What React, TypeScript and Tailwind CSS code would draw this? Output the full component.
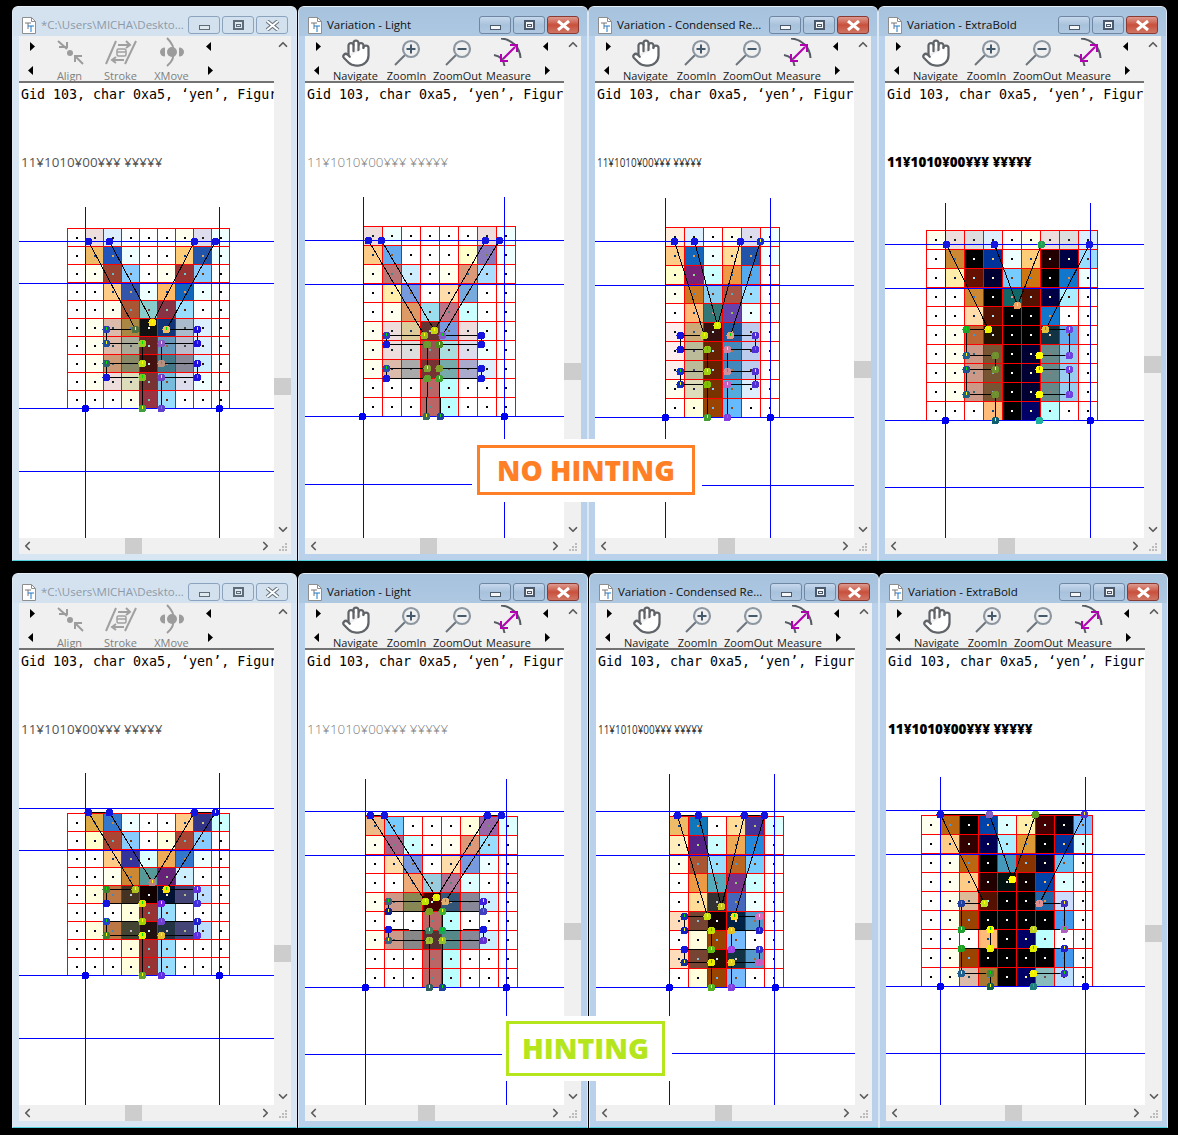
import React from 'react';
import { ChevronDown, ChevronLeft, ChevronRight, ChevronUp, Hand } from 'lucide-react';

type Pt = [number, number, string];

interface Panel {
  ox: number; // crop origin the coordinates below were read from, page px
  oy: number;
  x0: number;
  y0: number;
  cell: number;
  vert: [number, number];
  vTop: number;
  horiz: number[];
  lower: number;
  cells: string[];
  pts: Pt[];
  big: [number, number][];
}

const B = '#1414e0';

const rowsOf = (s: string) => s.split('|');

// Coordinates are 3x page px
const TOP_REGULAR: Panel = {
  ox: 10, oy: 190, x0: 172, y0: 115, cell: 54, vert: [226, 628], vTop: 52, horiz: [154, 280, 655], lower: 471,
  cells: rowsOf('fff edd def fff fff fff ffe dde eff|fff eb6 25b eff fff fff fc7 25a eff|fff ffe 943 8cf fff ffe 933 8cf fff|fff fff fc8 35a eff fb6 16b eff fff|fff fff ffe a53 8cc 834 9df fff fff|fff ffe dba a84 111 137 abc def fff|fff ffe dba aa9 622 69b bbc def fff|fff ffe c97 886 411 478 889 cef fff|fff ffe edd ddb 733 7bd dde eff fff|fff fff fff ffe 934 9df fff fff fff'),
  pts: [[236, 153, B], [377, 418, '#507040'], [288, 418, '#2840c0'], [288, 460, '#2050a0'], [397, 460, '#98d020'], [397, 519, '#b8e010'], [288, 519, '#306070'], [288, 561, B], [397, 561, '#80c020'], [397, 655, '#40a040'], [453, 655, '#6040d0'], [454, 561, '#7040c8'], [561, 561, '#2010e0'], [561, 519, '#2010e0'], [454, 519, '#b89080'], [454, 460, '#8858c0'], [561, 460, '#2010e0'], [561, 418, '#2010e0'], [470, 418, '#f0c060'], [615, 153, B], [554, 153, B], [426, 398, '#ffe010'], [297, 153, B]],
  big: [[225, 655], [627, 655]],
};

const TOP_LIGHT: Panel = {
  ox: 300, oy: 190, x0: 190, y0: 109, cell: 57, vert: [190, 613], vTop: 21, horiz: [151, 283, 679], lower: 484,
  cells: rowsOf('edd eff fff fff fff fff edd eff|fc8 6ae fff fff fff ffc 87b eff|ffe b77 cef fff ffe d97 adf fff|fff fea 79d fff fda 7ad fff fff|fff ffe d96 9de b78 cff fff fff|ffe edd dc9 633 79d edd eff fff|ffe edd ddd 955 add dde eff fff|ffe dba aaa 733 7aa aac def fff|fff fff fff b66 bff fff fff fff|fff fff fff b66 bff fff fff fff'),
  pts: [[204, 151, B], [372, 435, '#9ab820'], [258, 435, '#2a3cc0'], [258, 463, B], [381, 463, '#6a9a30'], [381, 536, '#80a030'], [258, 536, '#2a4cb0'], [258, 566, B], [381, 566, '#60a030'], [380, 678, '#3a6a60'], [420, 678, '#2040a0'], [419, 566, '#40a030'], [543, 566, B], [543, 536, B], [419, 536, '#80a030'], [419, 463, '#508820'], [543, 463, B], [543, 435, B], [428, 435, '#8855cc'], [597, 151, B], [555, 151, B], [403, 422, '#c4d410'], [245, 151, B]],
  big: [[188, 678], [612, 678]],
};

const TOP_CONDENSED: Panel = {
  ox: 590, oy: 190, x0: 226, y0: 112, cell: 57, vert: [226, 541], vTop: 24, horiz: [154, 286, 682], lower: 485,
  cells: rowsOf('fed def fff ffe dde eff|fc8 16b eff fd9 25a eff|ffc 727 cff e94 5ae fff|ffe c72 8ce a54 9df fff|fff fb7 377 64a eff fff|fee ca7 311 259 bce fff|fee bb9 620 48b bce fff|fee bb9 620 48b bce fff|ffe ddb 730 5ad def fff|fff ffd 940 6bf fff fff'),
  pts: [[252, 153, B], [342, 435, '#c0e010'], [270, 435, B], [270, 477, B], [351, 477, '#90c010'], [351, 543, '#a0d010'], [270, 543, '#1030d0'], [270, 582, '#1030c0'], [351, 582, '#80c000'], [351, 681, '#40a030'], [411, 681, '#8040e0'], [411, 582, '#c060c0'], [495, 582, '#5030d0'], [495, 543, '#5030d0'], [411, 543, '#d090a0'], [411, 477, '#d080a0'], [495, 477, '#5030d8'], [495, 435, '#5030d0'], [420, 435, '#e0a080'], [510, 153, '#1030d0'], [450, 153, B], [381, 405, '#d8f000'], [312, 153, B]],
  big: [[225, 681], [540, 681]],
};

const TOP_BOLD: Panel = {
  ox: 880, oy: 190, x0: 139, y0: 121, cell: 57, vert: [196, 631], vTop: 39, horiz: [162, 295, 691], lower: 487,
  cells: rowsOf('ffe edd ddd def fff ffe edd ddd def|fff c83 000 039 eff fc7 200 004 9df|fff fea 610 003 7cf c71 000 17c eff|fff fff c83 000 166 510 004 aef fff|fff fff fda 510 000 000 17c fff fff|fff ffe b63 210 000 000 134 6ae fff|fff ffe c98 753 000 003 688 9ce fff|fff ffe c98 753 000 003 688 9ce fff|fff ffe c98 753 000 003 688 9ce fff|fff fff fff fb7 000 006 bff fff fff'),
  pts: [[198, 162, B], [326, 417, '#e8f000'], [258, 417, '#20a030'], [258, 495, '#206090'], [345, 495, '#709030'], [345, 537, '#709030'], [258, 537, '#205090'], [258, 612, '#206080'], [345, 612, '#709030'], [345, 690, '#106070'], [477, 690, '#20b0a0'], [477, 612, '#ffff00'], [567, 612, '#7040e0'], [567, 537, '#7040e0'], [477, 537, '#ffff00'], [477, 495, '#ffff00'], [567, 495, '#7040e0'], [567, 417, '#7040e0'], [495, 417, '#e0c040'], [627, 162, B], [483, 162, '#20a050'], [411, 345, '#f0a060'], [342, 162, B]],
  big: [[195, 690], [630, 690]],
};

const BOTTOM_REGULAR: Panel = {
  ox: 10, oy: 770, x0: 172, y0: 130, cell: 54, vert: [226, 628], vTop: 10, horiz: [115, 241, 616], lower: 1038,
  cells: rowsOf('fff da4 37c eff fff fff fc8 338 cff|fff ffc a43 8cf fff ffd a43 8cf fff|fff fff fc8 339 dff ea5 37c eff fff|fff fff ffe c83 599 627 cef fff fff|fff ffd b74 432 100 013 447 bdf fff|fff fff fff ffd 933 9df fff fff fff|fff ffd b74 443 211 234 447 bdf fff|fff fff fff ffd 933 9df fff fff fff|fff fff fff ffd 933 9df fff fff fff'),
  pts: [[236, 126, B], [377, 357, '#b0c020'], [288, 357, '#408030'], [288, 400, B], [397, 400, '#e0e000'], [397, 453, '#a0d000'], [288, 453, '#2040d0'], [288, 495, '#408030'], [397, 495, '#e0f000'], [397, 616, '#60a030'], [453, 616, '#6030e0'], [454, 495, '#e0c030'], [561, 495, '#6030e0'], [561, 453, '#2020d0'], [454, 453, '#7040d0'], [454, 400, '#7020e0'], [561, 400, '#4030e0'], [561, 357, '#6030e0'], [470, 357, '#ffe000'], [615, 126, '#1010e0'], [554, 126, B], [426, 338, '#c08080'], [297, 126, B]],
  big: [[225, 616], [627, 616]],
};

const BOTTOM_LIGHT: Panel = {
  ox: 300, oy: 770, x0: 196, y0: 139, cell: 57, vert: [196, 619], vTop: 27, horiz: [124, 256, 652], lower: 1054,
  cells: rowsOf('eb8 7cf fff fff fff ffd 96a dff|ffe a68 cff fff ffe d97 9df fff|fff fda 79d fff fda 79d eff fff|fff fff ea7 9cd a79 dff fff fff|ffe c98 885 400 357 889 cef fff|fff fff fff b66 bff fff fff fff|ffe c98 888 533 588 889 cef fff|fff fff fff b66 bff fff fff fff|fff fff fff b66 bff fff fff fff'),
  pts: [[210, 137, B], [377, 393, '#c0e000'], [264, 393, '#406080'], [264, 423, '#102090'], [387, 423, '#80a020'], [387, 481, '#408060'], [264, 478, B], [264, 510, '#406080'], [387, 510, '#a0c030'], [387, 651, '#306060'], [426, 651, '#2040a0'], [426, 510, '#90c030'], [549, 510, '#6030d0'], [549, 478, B], [426, 481, '#20a060'], [426, 423, '#40b030'], [549, 423, '#4040c0'], [549, 393, '#4020e0'], [435, 393, '#e0b070'], [603, 137, B], [561, 137, B], [408, 381, '#e0f000'], [252, 137, B]],
  big: [[195, 651], [618, 651]],
};

const BOTTOM_CONDENSED: Panel = {
  ox: 590, oy: 770, x0: 239, y0: 139, cell: 57, vert: [238, 553], vTop: 12, horiz: [124, 256, 652], lower: 1053,
  cells: rowsOf('eb6 17b fff fd9 439 dff|feb 528 cff ea5 28d fff|ffe a53 9df b62 7cf fff|fff e94 5ab 738 cff fff|fff fd9 333 46b eff fff|fdb 743 100 024 59c fff|fff ffd 940 7bf fff fff|fdb 743 210 134 59c fff|fff ffd 940 7bf fff fff'),
  pts: [[263, 137, B], [353, 438, '#c8e010'], [282, 438, '#1030b0'], [282, 480, '#1020c0'], [363, 480, '#c0e000'], [363, 537, '#60c010'], [282, 537, B], [282, 576, '#103090'], [363, 576, '#e8f000'], [363, 651, '#50b020'], [423, 651, '#8040e0'], [423, 576, '#e0d020'], [507, 576, '#c060c0'], [507, 537, '#3030d0'], [423, 537, '#a040e0'], [423, 480, '#e0c020'], [507, 480, '#2020d0'], [507, 438, '#d070c0'], [432, 438, '#ffd820'], [522, 137, B], [462, 137, B], [393, 408, '#c8c820'], [324, 137, B]],
  big: [[237, 651], [555, 651]],
};

const BOTTOM_BOLD: Panel = {
  ox: 880, oy: 770, x0: 125, y0: 136, cell: 57, vert: [181, 616], vTop: 21, horiz: [121, 253, 649], lower: 1053,
  cells: rowsOf('ffe b61 000 04a dff fea 400 001 7bf|fff fc8 300 005 aef d93 000 039 dff|fff ffe b61 000 49b 830 002 6be fff|fff ffe fc8 200 011 100 04a dff fff|fff ffe db9 510 000 000 26a cdf fff|fff ffe 940 000 000 000 000 49e fff|fff fff fff fb7 000 006 bff fff fff|fff ffe 940 000 000 000 000 49e fff|fff ffe dba a73 000 006 8bb bdf fff'),
  pts: [[182, 133, B], [312, 399, '#c0e020'], [243, 399, '#2040a0'], [243, 477, '#20a030'], [330, 477, '#ffff00'], [330, 534, '#e8f000'], [243, 534, '#20a020'], [243, 609, '#206090'], [330, 609, '#508040'], [330, 648, '#106050'], [461, 648, '#208080'], [461, 609, '#f0f000'], [552, 609, '#4030d0'], [552, 534, '#2020d0'], [461, 534, '#e0f000'], [461, 477, '#c0d020'], [552, 477, '#b060c0'], [552, 399, '#4030c0'], [479, 399, '#e09090'], [612, 133, '#5030d0'], [467, 133, '#60a020'], [396, 327, '#ffff00'], [327, 133, '#8060c0']],
  big: [[180, 648], [615, 648]],
};

// grid dots are xor-drawn, so they come out as the inverse of the cell
const invert = (c: string) =>
  '#' + c.split('').map((d) => (15 - parseInt(d, 16)).toString(16)).join('');

const GlyphView: React.FC<{ panel: Panel; left: number; top: number; width: number; height: number }> = ({
  panel,
  left,
  top,
  width,
  height,
}) => {
  const px = (x: number) => Math.floor(panel.ox + x / 3);
  const py = (y: number) => Math.floor(panel.oy + y / 3);
  const grid = panel.cells.map((r) => r.split(' '));
  const cols = grid[0].length;
  const rows = grid.length;
  const xAt = (i: number) => px(panel.x0 + i * panel.cell);
  const yAt = (i: number) => py(panel.y0 + i * panel.cell);
  const outline = panel.pts.map(([x, y]) => `${px(x) + 0.5},${py(y) + 0.5}`).join(' ');
  const bottom = top + height;

  return (
    <svg
      className="absolute inset-0"
      width={width}
      height={height}
      viewBox={`${left} ${top} ${width} ${height}`}
      shapeRendering="crispEdges"
    >
      {grid.map((row, r) =>
        row.map((c, i) => (
          <g key={`${r}-${i}`}>
            {c !== 'fff' && <rect x={xAt(i)} y={yAt(r)} width={xAt(i + 1) - xAt(i)} height={yAt(r + 1) - yAt(r)} fill={`#${c}`} />}
            <rect
              x={Math.floor((xAt(i) + xAt(i + 1)) / 2)}
              y={Math.floor((yAt(r) + yAt(r + 1)) / 2)}
              width={2}
              height={2}
              fill={invert(c)}
            />
          </g>
        )),
      )}
      {Array.from({ length: cols + 1 }, (_, i) => (
        <line key={i} x1={xAt(i) + 0.5} x2={xAt(i) + 0.5} y1={yAt(0)} y2={yAt(rows) + 1} stroke="#ff0000" />
      ))}
      {Array.from({ length: rows + 1 }, (_, i) => (
        <line key={i} y1={yAt(i) + 0.5} y2={yAt(i) + 0.5} x1={xAt(0)} x2={xAt(cols) + 1} stroke="#ff0000" />
      ))}
      <polygon points={outline} fill="none" stroke="#000000" />
      {panel.vert.map((x) => (
        <line key={x} x1={px(x) + 0.5} x2={px(x) + 0.5} y1={py(panel.vTop)} y2={bottom} stroke="#0000ff" />
      ))}
      {panel.horiz.map((y) => (
        <line key={y} y1={py(y) + 0.5} y2={py(y) + 0.5} x1={left} x2={left + width} stroke="#0000ff" />
      ))}
      <line y1={panel.lower + 0.5} y2={panel.lower + 0.5} x1={left} x2={left + width} stroke="#0000ff" />
      {panel.pts.map(([x, y, c], i) => (
        <g key={i}>
          <circle cx={px(x) + 0.5} cy={py(y) + 0.5} r={4} fill={c} />
          {c !== B && <rect x={px(x)} y={py(y) - 2} width={1} height={3} fill={i % 2 ? '#ffff00' : '#00e000'} />}
        </g>
      ))}
      {panel.big.map(([x, y]) => (
        <circle key={x} cx={px(x) + 0.5} cy={py(y) + 0.5} r={4} fill="#0000f0" />
      ))}
    </svg>
  );
};

const Tri: React.FC<{ dir: 'left' | 'right' }> = ({ dir }) => (
  <svg width="5" height="9" viewBox="0 0 5 9">
    <polygon points={dir === 'right' ? '0,0 5,4.5 0,9' : '5,0 0,4.5 5,9'} fill="#000000" />
  </svg>
);

const ZoomGlyph: React.FC<{ plus?: boolean }> = ({ plus }) => (
  <svg width="30" height="29" viewBox="0 0 30 29" fill="none">
    <path d="M13 17 L3 27" stroke="#6c747c" strokeWidth="2" />
    <circle cx="19" cy="11" r="8" fill="#f0f0f0" stroke="#8d97a1" strokeWidth="2.2" />
    <path d="M14.5 11 H23.5" stroke="#44596b" strokeWidth="2" />
    {plus && <path d="M19 6.5 V15.5" stroke="#44596b" strokeWidth="2" />}
  </svg>
);

const MeasureGlyph = () => (
  <svg width="32" height="29" viewBox="0 0 32 29" fill="none">
    <path d="M8 0.5 C18 1 27 9 27.5 20" stroke="#555c63" strokeWidth="2" />
    <path d="M1 17 C7 18 11 22 11.5 28" stroke="#555c63" strokeWidth="2" />
    <path d="M10 21 L22 9" stroke="#b000b0" strokeWidth="2.2" />
    <path d="M8 16 V23 H15" stroke="#b000b0" strokeWidth="2" />
    <path d="M17 7 H24 V14" stroke="#b000b0" strokeWidth="2" />
  </svg>
);

const AlignGlyph = () => (
  <svg width="30" height="29" viewBox="0 0 30 29" fill="none" stroke="#9c9c9c">
    <path d="M3 3 L12 11" strokeWidth="2" />
    <path d="M4 9 H12 V4" strokeWidth="2" />
    <path d="M28 26 L20 18" strokeWidth="2" />
    <path d="M20 24 V18 H27" strokeWidth="2" />
    <circle cx="15" cy="15" r="3" fill="#9c9c9c" stroke="none" />
  </svg>
);

const StrokeGlyph = () => (
  <svg width="32" height="29" viewBox="0 0 32 29" fill="none" stroke="#a0a0a0" strokeWidth="2">
    <path d="M1 26 L11 3" />
    <path d="M20 26 L31 3" />
    <path d="M13 7 H24 M21 3 L25 7 L21 10" />
    <path d="M8 22 H19 M11 19 L7 22 L11 25" />
    <rect x="12" y="11" width="9" height="7" rx="1.5" strokeWidth="1.5" />
    <path d="M12 14 H21" strokeWidth="1.5" />
  </svg>
);

const XMoveGlyph = () => (
  <svg width="32" height="31" viewBox="0 0 32 31" fill="#9c9c9c">
    <circle cx="16" cy="15" r="5" />
    <path d="M9 10.5 V19.5 A5 4.5 0 0 1 9 10.5 Z" />
    <path d="M23 10.5 V19.5 A5 4.5 0 0 0 23 10.5 Z" />
    <path d="M11 1 C17 7 18 12 17 15 C18 19 17 24 11 29" fill="none" stroke="#9c9c9c" strokeWidth="2" />
  </svg>
);

const ACTIVE_TOOLS: [string, React.ReactNode][] = [
  ['Navigate', <Hand key="h" size={30} strokeWidth={1.8} color="#606468" fill="#ffffff" />],
  ['ZoomIn', <ZoomGlyph key="i" plus />],
  ['ZoomOut', <ZoomGlyph key="o" />],
  ['Measure', <MeasureGlyph key="m" />],
];

const DISABLED_TOOLS: [string, React.ReactNode][] = [
  ['Align', <AlignGlyph key="a" />],
  ['Stroke', <StrokeGlyph key="s" />],
  ['XMove', <XMoveGlyph key="x" />],
];

const Toolbar: React.FC<{ active: boolean }> = ({ active }) => {
  const tools = active ? ACTIVE_TOOLS : DISABLED_TOOLS;
  return (
    <div className="flex h-[45px] shrink-0 bg-[#f0f0f0]">
      <div className="flex w-[25px] shrink-0 flex-col items-center pt-[6px] gap-[15px]">
        <div className="ml-[1px] flex"><Tri dir="right" /></div>
        <div className="mr-[2px] flex"><Tri dir="left" /></div>
      </div>
      {tools.map(([label, icon]) => (
        <div key={label} className="flex w-[51px] shrink-0 flex-col items-center pt-[2px]">
          <div className="flex h-[29px] items-center justify-center">{icon}</div>
          <span
            className={`mt-[2px] whitespace-nowrap text-[11px] leading-[14px] ${active ? 'text-[#1a1a1a]' : 'text-[#808080]'}`}
          >
            {label}
          </span>
        </div>
      ))}
      <div className="flex w-[24px] shrink-0 flex-col items-center pt-[6px] gap-[15px]">
        <div className="mr-[2px] flex"><Tri dir="left" /></div>
        <div className="ml-[2px] flex"><Tri dir="right" /></div>
      </div>
    </div>
  );
};

const TitleIcon = () => (
  <svg width="14" height="17" viewBox="0 0 14 17" fill="none" className="shrink-0">
    <path d="M0.5 0.5 H9.5 L13.5 4.5 V16.5 H0.5 Z" fill="#ffffff" stroke="#8e8e8e" />
    <path d="M9.5 0.5 V4.5 H13.5" stroke="#8e8e8e" />
    <path d="M3 6 H9 M6 6 V12" stroke="#777777" />
    <path d="M6 9 H12 M9 9 V15" stroke="#1f78c8" />
  </svg>
);

const WinButton: React.FC<{ kind: 'min' | 'max' | 'close'; active: boolean }> = ({ kind, active }) => {
  const skin =
    kind === 'close' && active
      ? 'bg-gradient-to-b from-[#dc9a90] via-[#c8503c] to-[#cf7565] border-[#8a3a30]'
      : active
        ? 'bg-gradient-to-b from-[#c6d8ec] via-[#a9c2dc] to-[#b0c8e0] border-[#6f87a3]'
        : 'bg-[#d3e1ef] border-[#8ba3bc]';
  const ink = active ? '#f4f6f8' : '#dfe7ef';
  const edge = active ? '#4a5a6c' : '#5e6c7a';
  return (
    <div className={`flex h-[18px] w-[32px] items-center justify-center rounded-[3px] border ${skin}`}>
      {kind === 'min' && <div className="mt-[4px] h-[5px] w-[11px] border" style={{ background: ink, borderColor: edge }} />}
      {kind === 'max' && (
        <div className="flex h-[10px] w-[11px] items-center justify-center border-2" style={{ borderColor: edge, background: ink }}>
          <div className="h-[3px] w-[5px] border" style={{ borderColor: edge, background: ink }} />
        </div>
      )}
      {kind === 'close' && (
        <svg width="15" height="11" viewBox="0 0 15 11">
          {!active && <path d="M2 1 L13 10 M13 1 L2 10" stroke="#66727e" strokeWidth="4" />}
          <path d="M2 1 L13 10 M13 1 L2 10" stroke="#ffffff" strokeWidth={active ? 3 : 2} />
        </svg>
      )}
    </div>
  );
};

type Weight = 'regular' | 'light' | 'condensed' | 'bold';

interface Win {
  title: string;
  active: boolean;
  x: number;
  y: number;
  w: number;
  clientW: number;
  weight: Weight;
  panel: Panel;
  vThumb: number;
  hThumb: number;
}

const SAMPLE = '11¥1010¥00¥¥¥ ¥¥¥¥¥';

const Window: React.FC<{ win: Win }> = ({ win }) => {
  const clientLeft = win.x + 7;
  const clientTop = win.y + 30;
  const mainW = win.clientW - 17;
  const canvasTop = clientTop + 47;
  const canvasH = 502 - 47;

  return (
    <div
      className={`absolute flex h-[555px] flex-col rounded-t-[6px] border border-b-[#4fd0dc] border-l-[#dce8f4] border-r-[#dce8f4] border-t-[#e8eef5] ${win.active ? 'bg-[#b9d1ea]' : 'bg-[#d8e6f3]'}`}
      style={{ left: win.x, top: win.y, width: win.w }}
    >
      <div
        className={`flex h-[29px] shrink-0 items-center rounded-t-[5px] pl-[9px] pr-[8px] pt-[7px] ${win.active ? 'bg-gradient-to-b from-[#a6c2dd] to-[#aec8e2]' : 'bg-[#d4e2f0]'}`}
      >
        <TitleIcon />
        <span className={`ml-[5px] flex-1 whitespace-nowrap text-[11.5px] ${win.active ? 'text-[#111111]' : 'text-[#8c9aa8]'}`}>
          {win.title}
        </span>
        <div className="flex gap-[2px]">
          <WinButton kind="min" active={win.active} />
          <WinButton kind="max" active={win.active} />
          <WinButton kind="close" active={win.active} />
        </div>
      </div>
      <div className="ml-[6px] flex h-[518px] flex-col bg-[#f0f0f0]" style={{ width: win.clientW }}>
        <div className="flex h-[502px]">
          <div className="flex flex-col bg-white" style={{ width: mainW }}>
            <Toolbar active={win.active} />
            <div className="h-[2px] shrink-0 bg-[#737373]" />
            <div className="relative flex-1 overflow-hidden">
              <GlyphView panel={win.panel} left={clientLeft} top={canvasTop} width={mainW} height={canvasH} />
              <div className="relative whitespace-nowrap pl-[2px] pt-[1px] font-['DejaVu_Sans_Mono',monospace] text-[13.3px] leading-[22px] text-black">
                Gid 103, char 0xa5, ‘yen’, Figur
              </div>
              <div className="relative mt-[48px] whitespace-nowrap pl-[2px] text-[13.4px] leading-[16px]">
                {win.weight === 'regular' && <span className="text-[#555555]">{SAMPLE}</span>}
                {win.weight === 'light' && <span className="font-light text-[#7c7c7c]">{SAMPLE}</span>}
                {win.weight === 'condensed' && (
                  <span className="inline-block origin-left scale-x-[0.74] text-[#333333]">{SAMPLE}</span>
                )}
                {win.weight === 'bold' && <span className="font-extrabold text-black">{SAMPLE}</span>}
              </div>
            </div>
          </div>
          <div className="flex w-[17px] shrink-0 flex-col items-center">
            <ChevronUp size={14} strokeWidth={3} color="#5c5c5c" className="h-[17px] shrink-0" />
            <div
              className="h-[17px] w-full shrink-0 bg-[#cdcdcd]"
              style={{ marginTop: win.vThumb - clientTop - 17 }}
            />
            <ChevronDown size={14} strokeWidth={3} color="#5c5c5c" className="mt-auto h-[17px] shrink-0" />
          </div>
        </div>
        <div className="flex h-[16px] items-center">
          <ChevronLeft size={14} strokeWidth={3} color="#5c5c5c" className="w-[17px] shrink-0" />
          <div
            className="h-[16px] w-[17px] shrink-0 bg-[#cdcdcd]"
            style={{ marginLeft: win.hThumb - clientLeft - 17 }}
          />
          <ChevronRight size={14} strokeWidth={3} color="#5c5c5c" className="ml-auto w-[17px] shrink-0" />
          <svg width="17" height="16" viewBox="0 0 17 16" className="shrink-0" fill="#bcbcbc">
            <rect x="11" y="5" width="2" height="2" />
            <rect x="8" y="8" width="2" height="2" />
            <rect x="11" y="8" width="2" height="2" />
            <rect x="5" y="11" width="2" height="2" />
            <rect x="8" y="11" width="2" height="2" />
            <rect x="11" y="11" width="2" height="2" />
          </svg>
        </div>
      </div>
    </div>
  );
};

const PATH_TITLE = '*C:\\Users\\MICHA\\Deskto...';

const WINDOWS: Win[] = [
  { title: PATH_TITLE, active: false, x: 12, y: 6, w: 285, clientW: 272, weight: 'regular', panel: TOP_REGULAR, vThumb: 378, hThumb: 125 },
  { title: 'Variation - Light', active: true, x: 298, y: 6, w: 290, clientW: 276, weight: 'light', panel: TOP_LIGHT, vThumb: 363, hThumb: 420 },
  { title: 'Variation - Condensed Re...', active: true, x: 588, y: 6, w: 290, clientW: 276, weight: 'condensed', panel: TOP_CONDENSED, vThumb: 361, hThumb: 718 },
  { title: 'Variation - ExtraBold', active: true, x: 878, y: 6, w: 289, clientW: 276, weight: 'bold', panel: TOP_BOLD, vThumb: 356, hThumb: 998 },
  { title: PATH_TITLE, active: false, x: 12, y: 573, w: 285, clientW: 272, weight: 'regular', panel: BOTTOM_REGULAR, vThumb: 945, hThumb: 125 },
  { title: 'Variation - Light', active: true, x: 298, y: 573, w: 290, clientW: 276, weight: 'light', panel: BOTTOM_LIGHT, vThumb: 923, hThumb: 418 },
  { title: 'Variation - Condensed Re...', active: true, x: 589, y: 573, w: 290, clientW: 276, weight: 'condensed', panel: BOTTOM_CONDENSED, vThumb: 923, hThumb: 715 },
  { title: 'Variation - ExtraBold', active: true, x: 879, y: 573, w: 289, clientW: 276, weight: 'bold', panel: BOTTOM_BOLD, vThumb: 925, hThumb: 1005 },
];

export default function App() {
  return (
    <div className="relative h-[1135px] w-[1178px] overflow-hidden bg-black font-['Open_Sans',sans-serif]">
      {WINDOWS.map((win) => (
        <Window key={`${win.x}-${win.y}`} win={win} />
      ))}

      <div className="absolute left-[472px] top-[439px] h-[63px] w-[230px] bg-white pl-[5px] pt-[6px]">
        <div className="flex h-[50px] w-[218px] items-center justify-center border-[3px] border-[#ff7f27] text-[28px] font-extrabold text-[#ff7f27]">
          NO HINTING
        </div>
      </div>
      <div className="absolute left-[502px] top-[1016px] h-[65px] w-[170px] bg-white pl-[4px] pt-[5px]">
        <div className="flex h-[55px] w-[159px] items-center justify-center border-[3px] border-[#b5e61d] text-[28.5px] font-extrabold text-[#b5e61d]">
          HINTING
        </div>
      </div>
    </div>
  );
}
